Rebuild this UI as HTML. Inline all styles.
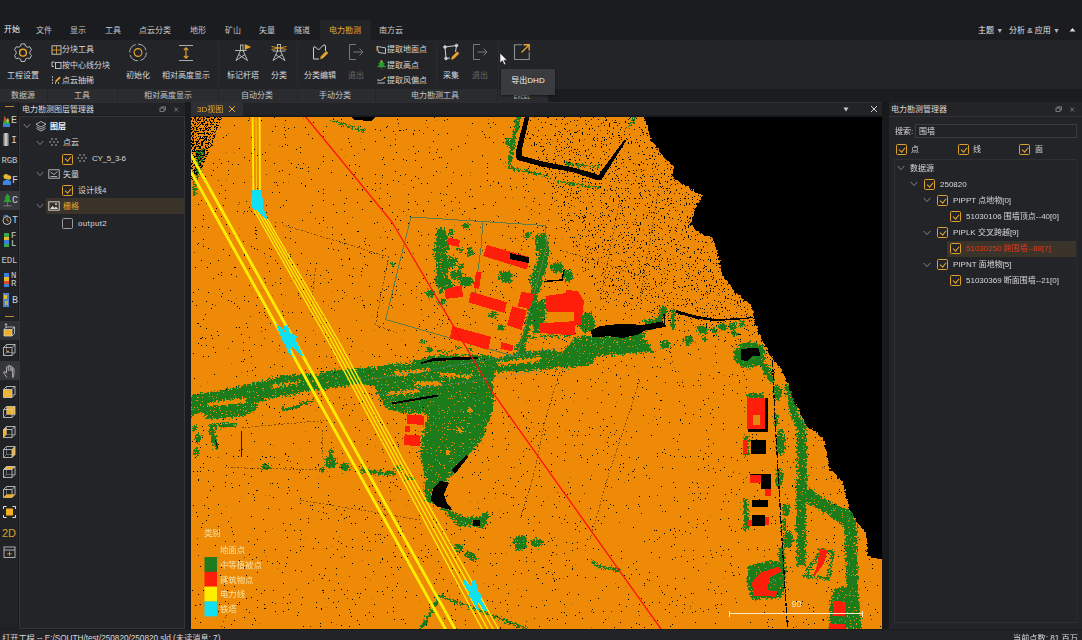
<!DOCTYPE html>
<html lang="zh-CN">
<head>
<meta charset="utf-8">
<title>电力勘测</title>
<style>
*{box-sizing:border-box;margin:0;padding:0}
html,body{width:1082px;height:640px;overflow:hidden;background:#1b1c1f}
body{font-family:"Liberation Sans","Noto Sans CJK SC",sans-serif;font-size:8px;color:#d4d4d4;position:relative;line-height:1}
.abs{position:absolute}
.t{position:absolute;white-space:nowrap;line-height:10px;height:10px}
#top{left:0;top:0;width:1082px;height:40px;background:#1b1c1f}
#ribbon{left:0;top:40px;width:1082px;height:49px;background:#232428}
#groups{left:0;top:89px;width:548px;height:12.5px;background:#2b2c30}
#hdr{left:0;top:101.5px;width:1082px;height:14.5px;background:#222327;border-top:1px solid #2c2d31;border-bottom:1px solid #1a1b1e}
#ltool{left:0;top:102px;width:19px;height:527px;background:#212225;border-right:1px solid #1a1b1e}
#lpanel{left:19px;top:116px;width:166px;height:513px;background:#232428;border:1px solid #34353a}
#rpanel{left:888.8px;top:102px;width:194px;height:527px;background:#232428}
#status{left:0;top:629.6px;width:1082px;height:11px;background:#222327}
#view{left:191px;top:116px;width:692px;height:513px;background:#ee8a05;overflow:hidden}
.m{top:25px;font-size:8px;color:#c8c8c8}
.g{top:91px;font-size:8px;color:#c8c8c8;transform:translateX(-50%)}
.rl{font-size:8px;color:#d6d6d6}
.cb{position:absolute;width:11px;height:11px;border:1px solid #e0a030;border-radius:1.5px;background:#232428}
.cb.on::after{content:"";position:absolute;left:3px;top:0.8px;width:2.8px;height:5.4px;border:solid #e8a832;border-width:0 1.2px 1.2px 0;transform:rotate(40deg)}
.cb.off{border-color:#9a9a9a}
.ar{position:absolute;width:5px;height:5px;border:solid #8a8a8a;border-width:0 1px 1px 0;transform:rotate(45deg)}
</style>
</head>
<body>
<div id="top" class="abs"></div>
<div id="ribbon" class="abs"></div>
<div id="groups" class="abs"></div>
<div id="hdr" class="abs"></div>
<div id="ltool" class="abs"></div>
<div id="lpanel" class="abs"></div>
<div id="rpanel" class="abs"></div>
<div id="view" class="abs"></div>
<!--VIEWSTART-->
<svg class="abs" style="left:191px;top:116px" width="692" height="513" viewBox="191 116 692 513" shape-rendering="crispEdges">
<defs>
<filter id="spk" x="0" y="0" width="100%" height="100%"><feTurbulence type="fractalNoise" baseFrequency="0.61 0.73" numOctaves="3" seed="3"/><feColorMatrix type="matrix" values="0 0 0 0 0  0 0 0 0 0  0 0 0 0 0  0 0 0 -80 18.5"/></filter>
<filter id="spk2" x="0" y="0" width="100%" height="100%"><feTurbulence type="fractalNoise" baseFrequency="0.67 0.59" numOctaves="3" seed="9"/><feColorMatrix type="matrix" values="0 0 0 0 0  0 0 0 0 0  0 0 0 0 0  0 0 0 -80 25"/><feComposite in2="SourceGraphic" operator="in"/></filter>
<filter id="spk3" x="0" y="0" width="100%" height="100%"><feTurbulence type="fractalNoise" baseFrequency="0.55 0.63" numOctaves="3" seed="5"/><feColorMatrix type="matrix" values="0 0 0 0 0  0 0 0 0 0  0 0 0 0 0  0 0 0 -80 38"/><feComposite in2="SourceGraphic" operator="in"/></filter>
<filter id="rough" x="-5%" y="-5%" width="110%" height="110%"><feTurbulence type="fractalNoise" baseFrequency="0.35" numOctaves="2" seed="7" result="n"/><feDisplacementMap in="SourceGraphic" in2="n" scale="5" xChannelSelector="R" yChannelSelector="G"/></filter>
<filter id="rough2" x="-5%" y="-5%" width="110%" height="110%"><feTurbulence type="fractalNoise" baseFrequency="0.45" numOctaves="2" seed="11" result="n"/><feDisplacementMap in="SourceGraphic" in2="n" scale="8" xChannelSelector="R" yChannelSelector="G" result="d"/><feTurbulence type="fractalNoise" baseFrequency="0.57 0.69" numOctaves="3" seed="17"/><feColorMatrix type="matrix" values="0 0 0 0 0  0 0 0 0 0  0 0 0 0 0  0 0 0 -80 24.5" result="h"/><feComposite in="d" in2="h" operator="out"/></filter>
</defs>
<rect x="191" y="116" width="692" height="513" fill="#ee8a05"/>
<rect x="191" y="116" width="692" height="513" fill="#000" filter="url(#spk)"/>
<g filter="url(#spk2)"><polygon fill="#000" points="520,116 660,116 780,380 700,330 600,300 560,220"/></g>
<g fill="#1e7b1e" filter="url(#rough2)"><polygon points="191,395 210,392 236,387.5 247,384.7 266,380 285,375 303.5,374.4 322,373.4 341,368.8 359,368.4 377.5,366.6 392.5,363.75 403.75,364.7 415,361 420,359.5 434,355.5 478,354.5 490,355.5 497,358 520,352 545,350 562,351 575,338 600,336 620,337 631,335 650,330 666,318 667,306 660,306 658,318 644,320 644,342 654,352 631,353 620,349 600,354 590,366 562,368 540,370 510,372 497,372 492,380 494,393 494,406 483,438 467,457 454,473 443,484 430,489 422,465 420,450 425,424 428,416 422.5,412.5 402,412.5 387,408.75 380,399 373.75,386 358.75,384 351,385.6 322,389.4 303.5,392 284.8,396 266,399 257.6,402 256.6,410 247,414.7 228.5,418.4 208,419.4 205,413.8 200,412 191,417.5" /><ellipse cx="422.5" cy="341" rx="2" ry="2.5"/><ellipse cx="430" cy="349.5" rx="3" ry="3"/><ellipse cx="458" cy="347.5" rx="3" ry="2"/><polygon points="436,350 452,351.5 452,353 436,352" /><ellipse cx="470" cy="349" rx="2.5" ry="2"/><polygon points="208,426 213,426 219,447 214,448" /><polygon points="208,424 236,423 236,427 208,428" /><ellipse cx="198" cy="438" rx="3" ry="5"/><ellipse cx="197" cy="452" rx="3" ry="4"/><ellipse cx="194" cy="428" rx="2" ry="4"/><ellipse cx="266" cy="467" rx="4.5" ry="3.5"/><ellipse cx="331" cy="462" rx="6.5" ry="6"/><polygon points="329.5,449 333,449 334,462 328,462" /><ellipse cx="345" cy="467" rx="5" ry="4"/><polygon points="360,468 395,472 395,476 362,473" /><ellipse cx="322" cy="470" rx="3" ry="2"/><polygon points="280,408 300,405 300,408 282,411" /><polygon points="300,402 314,399 314,402 300,405" /><polygon points="425,481 434.5,481 432,492 436,505 428,503 424,492" /><polygon points="450.5,510.5 466.4,517 479.7,517 487.7,510.5 489,518.4 483.7,529 477,526.4 458.4,526.4 450.5,518.4 440,508 444,505" /><ellipse cx="458.5" cy="547.7" rx="5" ry="3.5" transform="rotate(25 458.5 547.7)"/><ellipse cx="471" cy="556" rx="6" ry="4" transform="rotate(30 471 556)"/><ellipse cx="537" cy="543" rx="6" ry="4"/><ellipse cx="398" cy="468" rx="3" ry="3"/><ellipse cx="410" cy="478" rx="4" ry="3"/><polygon points="437,229 445,228 449,240 446,252 450,262 447,275 451,288 440,293 435,280 437,266 434,252 436,240" /><ellipse cx="444" cy="247" rx="6" ry="5"/><ellipse cx="452" cy="262" rx="5" ry="6"/><ellipse cx="456" cy="275" rx="6" ry="5"/><ellipse cx="466" cy="281" rx="7" ry="5.5"/><ellipse cx="447" cy="285" rx="6" ry="6"/><ellipse cx="430" cy="294" rx="4" ry="4.5"/><ellipse cx="442" cy="302" rx="4" ry="3"/><ellipse cx="466" cy="226" rx="4" ry="2.5"/><ellipse cx="460" cy="250" rx="3" ry="2.5"/><ellipse cx="393" cy="264" rx="2.5" ry="2.5"/><ellipse cx="470" cy="252" rx="3" ry="5"/><ellipse cx="461" cy="266" rx="3" ry="3"/><ellipse cx="451" cy="233" rx="3" ry="3"/><ellipse cx="505.5" cy="277" rx="7" ry="6.5"/><polygon points="534,236 546,232 550,250 546,270 540,290 532,300 530,280 538,258" /><ellipse cx="527" cy="235" rx="4" ry="3"/><ellipse cx="557" cy="268" rx="7" ry="5"/><ellipse cx="568" cy="276" rx="5" ry="6"/><ellipse cx="493" cy="315" rx="5" ry="3"/><ellipse cx="501" cy="327" rx="3" ry="3"/><polygon points="536,280 541,282 523,355 517,355" /><polygon points="536,302 545,298 546,312 544,332 534,334 530,318" /><polygon points="581,314 590,312 595,322 594,332 582,332 578,324" /><polygon points="574,336 630,336 630,354 600,356 574,352" /><ellipse cx="520" cy="349" rx="5" ry="6"/><polygon points="528,336 572,334 572,336 528,338" /><polygon points="670.6,308 675,308 675,330 671,330" /><ellipse cx="665" cy="345" rx="5" ry="4.5"/><ellipse cx="688.4" cy="340.6" rx="4.5" ry="4.5"/><ellipse cx="702.5" cy="329.7" rx="6" ry="4"/><ellipse cx="722" cy="327" rx="4" ry="4"/><ellipse cx="732.5" cy="326" rx="4" ry="4"/><ellipse cx="742" cy="324" rx="3" ry="3"/><ellipse cx="705" cy="339" rx="3" ry="2.5"/><ellipse cx="734" cy="333.4" rx="3" ry="3"/><ellipse cx="714" cy="331" rx="3" ry="3"/><ellipse cx="626" cy="343" rx="6" ry="6"/><ellipse cx="642" cy="346" rx="8" ry="6"/><ellipse cx="749.5" cy="355" rx="16" ry="13"/><polygon points="760,362 770,366 774,380 772,384 764,374" /><ellipse cx="777.5" cy="392" rx="4.5" ry="8"/><ellipse cx="780.5" cy="442" rx="4.5" ry="13"/><ellipse cx="776" cy="420" rx="2.5" ry="6"/><ellipse cx="779.5" cy="478" rx="4" ry="10"/><ellipse cx="786" cy="510" rx="4" ry="6"/><ellipse cx="788" cy="540" rx="5" ry="8"/><ellipse cx="781.5" cy="556" rx="4" ry="9"/><ellipse cx="784" cy="525" rx="2.5" ry="6"/><polygon points="784,384 790,384 797.5,398 798,414 806,426 807,462 806.5,487 830,501 851.6,512 857,521 858,600 862,629 848,629 846,560 844,526 822,511 806,502 806.4,566 797,566 796,497 797,462 797,430 789,412 787,396" /><polygon points="747.5,392.5 762.5,392.5 763,398 747,398" /><polygon points="744,436 749,436 749,456 744,456" /><polygon points="743,500 748,498 749,530 744,530" /><polygon points="748,566 760,562 784,560 786.5,572 782,598 752,600 747,584" /><polygon points="819.7,548 834.3,551 830.3,580 803.8,577.5 804,574.5 827.5,577 831,553.5 819,551" /><polygon points="804,574 821,549 823,550.5 806.5,576" /><polygon points="836,588 850,586 858,592 862,629 829,629 830,606 832,594" /><ellipse cx="509.5" cy="142.5" rx="4" ry="4.5"/><polygon points="516,117 521,117 514,150 511,165 507,165 510,148" /><polygon points="505.7,165.5 549,175 548,177 505,168" /><polygon points="565.8,162 599.4,167 599,168.5 565.5,163.5" /><polygon points="556,180 599,187 599,189 556,182" /><polygon points="633,117 636,117 630,128 628,127" /><polygon points="331,119 366,131 365,133 330,121" /><polygon points="196,150 206,148 200,170 195,196 192,196 196,170" /><polygon points="440,594.5 484,611 528,628 524,629 482,613 440,597" /><polygon points="439,595 442,596 423,629 419,629" /><ellipse cx="520.2" cy="543" rx="7" ry="8"/><polygon points="590,559 596,563 604,566.5 620,568.5 620,571 602,569 592,564" /></g>
<polyline points="411,217 545,225.5 547,245 517,357 385.6,319.5 411,217" fill="none" stroke="#5f7d45" stroke-width="1"/>
<polyline points="483,221 481,248 474,300" fill="none" stroke="#5f7d45" stroke-width="1"/>
<g fill="#ee8a05" filter="url(#rough2)"><polygon points="207,403 219,401 234,399.5 246,398 247,401.5 234,404 219,405.5 207,407" /><polygon points="441,373 471,375 471,378 441,377" /><polygon points="415,381 441,380.5 441,386 415,386" /><polygon points="387,393 419,389 419,392 387,396" /><polygon points="395,372 430,368 430,371 395,376" /><polygon points="497,362 540,357 540,361 497,366" /><polygon points="545.6,311 573.75,311 573.75,322 545.6,322" /><polygon points="270,386 300,381 300,383 270,389" /><ellipse cx="460" cy="430" rx="3" ry="2"/><ellipse cx="448" cy="452" rx="2" ry="3"/><ellipse cx="470" cy="410" rx="2" ry="2"/></g>
<g stroke="#7a80b8" stroke-width="0.8" stroke-dasharray="1.5 2" fill="none" shape-rendering="auto"><line x1="364" y1="380.6" x2="560" y2="348"/><line x1="372" y1="395.6" x2="540" y2="371"/></g>
<g fill="#000"><polygon points="420.6,362.8 433.75,358 477.8,356.8 477.8,359.2 433.75,361 420.6,364" /><polygon points="391.6,402.6 437.5,394.5 437.5,396.8 391.6,404.4" /><polygon points="439.9,481 449,482.6 443.8,494.5 447,503 453,510.5 437,506.5 430.5,500 433,489" /><polygon points="473,519.8 479.7,519.8 479.7,526.4 473,526.4" /><polygon points="451,470 466,455 468,457 455,474" /><polygon points="590.6,330.6 600,326 622.5,323.5 642.5,325 663,321.25 665,327 644.4,330.6 638.75,334.4 622.5,338 609.4,336.25 592.5,337.2" /><polyline points="664,313.75 665,327" fill="none" stroke="#000" stroke-width="1.3"/><polyline points="544,281.5 562,280 564,270" fill="none" stroke="#000" stroke-width="1.5"/><polygon points="525,116 529.5,116 521.5,152 522,156 545,162 573,167.5 595,173.5 598.5,175 624.5,139.5 627,139.5 601,180.5 597,180 572,172 544,167 517,160 515.5,153" /><polygon points="676,310 695,315.5 714,318.8 736,318.4 753,317 753,318 736,320 714,321 695,318.5 676,313" /><polygon points="741,349 758,347.5 760.6,356 752,356 747,361 741,360" /><polygon points="765,398 768,398 768,431.5 747.5,431.5 747.5,428.5 765,428.5" /><polygon points="750.6,440 766,440 766,454 750.6,454" /><polygon points="749.5,474 770.5,474 770.5,489 761,489 761,483 749.5,483" /><polygon points="752,500 768,500 768,506.5 752,506.5" /><polygon points="752,514.5 765,514.5 765,526.4 752,526.4" /><polyline points="772.5,360 775,420 778,470 782,540 787.5,628" fill="none" stroke="#000" stroke-width="1.2" stroke-dasharray="7 2 3 1"/><polygon points="350,116 376,116 372,121 354,120" /><polyline points="241.6,430.6 241.6,457" fill="none" stroke="#000" stroke-width="0.8"/><polyline points="215.4,440 218,449" fill="none" stroke="#000" stroke-width="0.8"/></g>
<g filter="url(#spk3)"><polygon fill="#000" points="191,116 222,116 214,140 202,168 191,182"/></g>
<g stroke="#1a1000" stroke-width="0.7" stroke-dasharray="2 1.5 1 2" fill="none" opacity="0.75">
<polyline points="282.5,225 340,242 388.8,257 381,295 375.5,325 399.4,333" fill="none" />
<polyline points="315.7,267.7 310.4,314" fill="none" />
<polyline points="224.5,467.5 322.8,470" fill="none" />
<polyline points="322.8,430 322.8,457" fill="none" />
<polyline points="241.8,427.7 330,420" fill="none" />
<polyline points="560,372 545,420 535,470 520,520" fill="none" />
<polyline points="640,380 610,470 590,540" fill="none" />
<polyline points="300,500 420,520" fill="none" />
<polyline points="560,250 600,262 650,280" fill="none" />
<polyline points="620,200 600,300" fill="none" />
<polyline points="660,180 640,300" fill="none" />
</g>
<g fill="#ff1e0a"><polygon points="448,237.5 460,240 459,247 447,244.5" /><polygon points="487,245 529.5,257 527,269.6 483,256" /><polygon points="476,271.7 481.7,271.7 479,289 473.7,287.7" /><polygon points="444.5,289 461.7,285 463,297 445.8,298.8" /><polygon points="471,291.7 507,302.3 504.2,313 468.4,302.3" /><polygon points="521.5,291.7 534.8,294.3 529.5,309 517.5,306.3" /><polygon points="512.2,306.3 526.8,310.3 521.5,330.2 507,325" /><polygon points="452.4,326.2 491,336.8 488.3,350 449.8,338.2" /><polygon points="501.6,342 513.5,345.6 512.2,351.4 500.3,348.8" /><polygon points="545.4,296 566,293 566,290 578,291 584,301 581.3,325 573.3,325 574,312 546.7,311.6" /><polygon points="538.8,323.5 576,321 574.6,335.5 540,333" /><polygon points="407,414.4 424.5,415.7 424,425 406.7,423.7" /><polygon points="404.6,426.3 410,426.3 410,431.7 404.6,431.7" /><polygon points="404.6,434.3 420.6,435.6 419.8,446.3 403.8,445" /><polygon points="747,398 765,398 765,428.75 747,428.75" /><polygon points="742.5,440 747.2,440 747.2,453.75 742.5,453.75" /><polygon points="750,475.4 761,475.4 761,482.8 750,482.8" /><polygon points="765,489 770.5,489 770.5,496 765,496" /><polygon points="746.6,520 752,520 752,526.4 746.6,526.4" /><polygon points="765,517 769,517 769,525 765,525" /><polygon points="760,573 779.9,566.3 781.2,571.6 769.2,578.2 767.9,590.2 777.2,591.5 775.9,596.8 753.3,595.5 752,582.2" /><polygon points="820,549 827.7,550.5 823.5,564 819,570 814,577 813,575.5 817,566" /><polygon points="833.5,600.8 846.3,602 845,616.7 832.5,615.5" /><polygon points="829,623.4 845,624 845,629 829,629" /></g>
<polygon fill="#000" points="509.5,253 529.5,257.5 528.5,263 510,259"/>
<g fill="#e08a10"><polygon points="752.5,415 760,415 760,425 752.5,425" /></g>
<polyline points="305,116 392,222 493,393 661,629" fill="none" stroke="#ff1010" stroke-width="1.3" shape-rendering="auto"/>
<g stroke="#ffee00" fill="none" shape-rendering="auto">
<line x1="189" y1="151.4" x2="455.6" y2="630" stroke-width="2.8"/>
<line x1="189" y1="168.4" x2="446" y2="630" stroke-width="2.8"/>
<line x1="252.6" y1="116" x2="253.4" y2="200" stroke-width="1.8"/><line x1="259.6" y1="116" x2="260" y2="200" stroke-width="1.8"/><line x1="256" y1="116" x2="256.6" y2="200" stroke-width="0.8" stroke-opacity="0.8"/>
<polyline points="254,210 327.5,340 392,460 481,627 482.6,630" stroke-width="1.4"/>
<polyline points="256.8,210 331,340 395.6,460 486.5,627 488.1,630" stroke-width="1.4"/>
<polyline points="259.5,210 334.5,340 399.3,460 492,627 493.6,630" stroke-width="1.4"/>
<polyline points="262,210 338,340 403,460 497.4,627 499.0,630" stroke-width="1.4"/>
</g>
<g fill="#10e0f0">
<polygon points="252,190 261,190 262.7,199 263,208 268,219 264,218 258,211 253,209 250.8,203" />
<polygon points="276,324 281,327 285,333 284,326 287,325 291,334 297,336 296,341 300,349 304,357 299,354 293,347 290,349 293,357 289,354 285,345 282,340" />
<polygon points="462.4,580 466,580 470,587 473,580 476,581 478,592 481,594 481,599 484,604 487.7,611.4 484,611 479,603 477,604 480,611 477,610 472,600 468,596 470,593 466,588" />
</g>
<path filter="url(#rough)" fill="#000" d="M642,110 L651,140 L663,156 L674,167 L672,177 L702,196 L695,209 L691,224 L697,232 L712,237 L718,254 L722,275 L735,292 L752,306 L754,321 L762,340 L769,354 L783,372 L794,400 L806,425 L824,439 L829,469 L843,483 L850,511 L866,534 L868,557 L882,559 L895,559 L895,100 Z"/>
<g font-family="Liberation Sans, Noto Sans CJK SC, sans-serif" font-size="8.4" fill="#f2e4ac" shape-rendering="auto">
<text x="204" y="536">类别</text>
<rect x="204.5" y="557" width="12.5" height="15" fill="#1e7b1e"/><rect x="204.5" y="571.8" width="12.5" height="15" fill="#ff1e0a"/><rect x="204.5" y="586.6" width="12.5" height="15" fill="#ffee00"/><rect x="204.5" y="601.4" width="12.5" height="15" fill="#10e0f0"/>
<text x="220" y="553">地面点</text>
<text x="220" y="568">中等植被点</text>
<text x="220" y="582.5">建筑物点</text>
<text x="220" y="597">电力线</text>
<text x="220" y="611.5">铁塔</text>
<path d="M729.5,610.5 V616.5 M729.5,613.5 H862.5 M862.5,610.5 V616.5" stroke="#f6ecc8" stroke-width="1" fill="none" shape-rendering="crispEdges"/>
<text x="796.5" y="607" text-anchor="middle" font-size="9" fill="#f4e6b4">90</text>
</g>
</svg>
<!--VIEWEND-->
<div id="status" class="abs"></div>
<!--CHROMESTART-->
<div class="abs" style="left:320px;top:20px;width:51px;height:20px;background:#232428"></div>
<div class="t m" style="left:36px;top:26.1px;">文件</div>
<div class="t m" style="left:70px;top:26.1px;">显示</div>
<div class="t m" style="left:105px;top:26.1px;">工具</div>
<div class="t m" style="left:139px;top:26.1px;">点云分类</div>
<div class="t m" style="left:190px;top:26.1px;">地形</div>
<div class="t m" style="left:225px;top:26.1px;">矿山</div>
<div class="t m" style="left:259px;top:26.1px;">矢量</div>
<div class="t m" style="left:294px;top:26.1px;">隧道</div>
<div class="t m" style="left:379px;top:26.1px;">南方云</div>
<div class="t m" style="left:4px;top:25.1px;color:#f2f2f2">开始</div>
<div class="t m" style="left:329px;top:26.1px;color:#e6a82e">电力勘测</div>
<div class="t m" style="left:978px;top:25.6px;color:#e4e4e4">主题 <span style="font-size:7px;color:#b4b4b4">▼</span></div>
<div class="t m" style="left:1009px;top:25.6px;color:#e4e4e4">分析 &amp; 应用 <span style="font-size:7px;color:#b4b4b4">▼</span></div>
<svg class="abs" style="left:1069px;top:27px" width="7" height="5" viewBox="0 0 7 5"><path d="M0.5,4.5 L3.5,1 L6.5,4.5 Z" fill="#ddd"/></svg>
<svg class="abs" style="left:13px;top:42px" width="20" height="20" viewBox="0 0 20 20" fill="none" stroke="#cfcfcf" stroke-width="1"><path d="M18.56,13.48 L16.69,16.72 L14.46,16.09 L12.44,17.26 L11.87,19.50 L8.13,19.50 L7.56,17.26 L5.54,16.09 L3.31,16.72 L1.44,13.48 L3.10,11.87 L3.10,9.53 L1.44,7.92 L3.31,4.68 L5.54,5.31 L7.56,4.14 L8.13,1.90 L11.87,1.90 L12.44,4.14 L14.46,5.31 L16.69,4.68 L18.56,7.92 L16.90,9.53 L16.90,11.87 Z" stroke-width="1" stroke-linejoin="round" stroke="#bdbdbd"/><circle cx="10" cy="10.7" r="3.4" stroke="#e8a62c" stroke-width="1.4"/></svg>
<div class="t" style="left:23px;top:71px;transform:translateX(-50%);color:#d8d8d8">工程设置</div>
<svg class="abs" style="left:128px;top:42px" width="20" height="20" viewBox="0 0 20 20" fill="none" stroke="#cfcfcf" stroke-width="1"><circle cx="10" cy="10.5" r="8.3" stroke-dasharray="10.5 2.5" stroke-width="0.9" stroke="#bdbdbd"/><circle cx="10" cy="10.5" r="3.9" stroke="#e8a62c" stroke-width="1.1"/></svg>
<div class="t" style="left:138px;top:71px;transform:translateX(-50%);color:#d8d8d8">初始化</div>
<svg class="abs" style="left:176px;top:42px" width="20" height="20" viewBox="0 0 20 20" fill="none" stroke="#cfcfcf" stroke-width="1"><path d="M3,3.5 H17 M3,18.5 H17" stroke-width="0.9" stroke="#bdbdbd"/><path d="M10,6 V16 M7.8,8.2 L10,5.8 12.2,8.2 M7.8,13.8 L10,16.2 12.2,13.8" stroke="#e8a62c" stroke-width="1.1"/></svg>
<div class="t" style="left:186px;top:71px;transform:translateX(-50%);color:#d8d8d8">相对高度显示</div>
<svg class="abs" style="left:233px;top:42px" width="20" height="20" viewBox="0 0 20 20" fill="none" stroke="#cfcfcf" stroke-width="1"><path d="M7,3 H10.5 M7.5,3 V8.5 L3,18.5 M10,3 V8.5 L14.5,18.5 M2,8.5 H13.5 M5.5,12.5 L14.5,18.5 M12,12.5 L3,18.5" stroke-width="0.9" stroke="#c4c4c4"/><path d="M12,2.5 L17.5,5 L12,7.5 Z" fill="#e8a62c" stroke="#e8a62c" stroke-width="0.6"/></svg>
<div class="t" style="left:243px;top:71px;transform:translateX(-50%);color:#d8d8d8">标记杆塔</div>
<svg class="abs" style="left:269px;top:42px" width="20" height="20" viewBox="0 0 20 20" fill="none" stroke="#cfcfcf" stroke-width="1"><path d="M8,2.5 H12 M8.5,2.5 V9 L4,18.5 M11.5,2.5 V9 L16,18.5 M3.5,9 H16.5 M6.5,12.5 L16,18.5 M13.5,12.5 L4,18.5" stroke-width="0.9" stroke="#c4c4c4"/><path d="M2.5,4.5 Q10,7.5 17.5,4.5 M2.5,7.5 Q10,4.5 17.5,7.5" stroke="#e8a62c" stroke-width="0.9"/></svg>
<div class="t" style="left:279px;top:71px;transform:translateX(-50%);color:#d8d8d8">分类</div>
<svg class="abs" style="left:310px;top:42px" width="20" height="20" viewBox="0 0 20 20" fill="none" stroke="#cfcfcf" stroke-width="1"><path d="M3.5,17 V6 Q3.5,4 5.5,5 L8.5,8 L13.5,3 Q15.5,2 15.5,5 V9 M3.5,17 H9" stroke-width="1"/><path d="M10.5,17 L11.2,14.2 L16.2,9.2 L18,11 L13,16 Z" fill="#e8a62c" stroke="#e8a62c" stroke-width="0.5"/></svg>
<div class="t" style="left:320px;top:71px;transform:translateX(-50%);color:#d8d8d8">分类编辑</div>
<svg class="abs" style="left:346px;top:42px" width="20" height="20" viewBox="0 0 20 20" fill="none" stroke="#77787b" stroke-width="1"><path d="M10,2.5 H3.5 V17.5 H10 M7.5,10 H17 M13.5,6.5 L17,10 L13.5,13.5" stroke-width="1"/></svg>
<div class="t" style="left:356px;top:71px;transform:translateX(-50%);color:#6a6b6e">退出</div>
<svg class="abs" style="left:441px;top:42px" width="20" height="20" viewBox="0 0 20 20" fill="none" stroke="#cfcfcf" stroke-width="1"><path d="M4,5 L15.5,3.5 L14.5,10 M4,5 L5,16.5 L9,16" stroke-width="1"/><circle cx="4" cy="5" r="1.3" fill="#cfcfcf"/><circle cx="15.5" cy="3.5" r="1.3" fill="#cfcfcf"/><circle cx="5" cy="16.5" r="1.3" fill="#cfcfcf"/><path d="M10.5,17.5 L11.2,14.7 L16.2,9.7 L18,11.5 L13,16.5 Z" fill="#e8a62c" stroke="#e8a62c" stroke-width="0.5"/></svg>
<div class="t" style="left:451px;top:71px;transform:translateX(-50%);color:#d8d8d8">采集</div>
<svg class="abs" style="left:470px;top:42px" width="20" height="20" viewBox="0 0 20 20" fill="none" stroke="#77787b" stroke-width="1"><path d="M10,2.5 H3.5 V17.5 H10 M7.5,10 H17 M13.5,6.5 L17,10 L13.5,13.5" stroke-width="1"/></svg>
<div class="t" style="left:480px;top:71px;transform:translateX(-50%);color:#6a6b6e">退出</div>
<svg class="abs" style="left:512px;top:42px" width="20" height="20" viewBox="0 0 20 20" fill="none" stroke="#cfcfcf" stroke-width="1"><path d="M10,2.8 H2.5 V17.5 H17.2 V10" stroke="#8c8d90" stroke-width="1.1"/><path d="M9.5,10.5 L17,3 M11.5,2.8 H17.2 V8.5" stroke="#e8a62c" stroke-width="1.4"/></svg>
<div class="t" style="left:522px;top:71px;transform:translateX(-50%);color:#d8d8d8"></div>
<svg class="abs" style="left:51px;top:44.5px" width="11" height="10" viewBox="0 0 11 10" fill="none" stroke="#cfcfcf" stroke-width="0.9"><rect x="1" y="0.8" width="9" height="8.4"/><path d="M5.5,0.8 V9.2 M1,5 H10" stroke="#e8a62c" stroke-width="0.8"/></svg>
<div class="t " style="left:62px;top:45.1px;color:#d8d8d8">分块工具</div>
<svg class="abs" style="left:51px;top:60px" width="11" height="10" viewBox="0 0 11 10" fill="none" stroke="#cfcfcf" stroke-width="0.9"><path d="M3.5,2 H1 V6.5 H3"/><rect x="4.5" y="2.5" width="5.5" height="6"/></svg>
<div class="t " style="left:62px;top:60.6px;color:#d8d8d8">按中心线分块</div>
<svg class="abs" style="left:51px;top:75px" width="11" height="10" viewBox="0 0 11 10" fill="none" stroke="#cfcfcf" stroke-width="0.9"><path d="M1,2 h1 M1,5 h1 M1,8 h1 M4,8 h1 M7,8 h1" stroke-width="1.3"/><path d="M4,6 L8.5,1.5 L9.8,2.8 L5.3,7.3 Z" fill="#e8a62c" stroke="none"/></svg>
<div class="t " style="left:62px;top:75.6px;color:#d8d8d8">点云抽稀</div>
<svg class="abs" style="left:376px;top:44.5px" width="11" height="10" viewBox="0 0 11 10" fill="none" stroke="#cfcfcf" stroke-width="0.9"><path d="M1,1.5 L9.5,2.8 V8.5 L2.5,7.5 Z"/><path d="M1,1.5 V6" stroke="#e8a62c"/></svg>
<div class="t " style="left:387px;top:45.1px;color:#d8d8d8">提取地面点</div>
<svg class="abs" style="left:376px;top:60px" width="11" height="10" viewBox="0 0 11 10" fill="none" stroke="#cfcfcf" stroke-width="0.9"><path d="M5.5,0.5 L2.5,4 H4 L1.5,7 H9.5 L7,4 H8.5 Z M5.5,7 V9.5" fill="#2c9a2c" stroke="#2c9a2c" stroke-width="0.5"/><circle cx="5.5" cy="1.2" r="1" fill="#e8a62c" stroke="none"/></svg>
<div class="t " style="left:387px;top:60.6px;color:#d8d8d8">提取高点</div>
<svg class="abs" style="left:376px;top:75px" width="11" height="10" viewBox="0 0 11 10" fill="none" stroke="#cfcfcf" stroke-width="0.9"><path d="M1,5 Q5,6.5 8,3.5 M1.5,8 H9"/><circle cx="8.8" cy="2.8" r="1" fill="#e8a62c" stroke="none"/></svg>
<div class="t " style="left:387px;top:75.6px;color:#d8d8d8">提取风偏点</div>
<div class="abs" style="left:218px;top:42px;width:1px;height:44px;background:#2b2c30"></div>
<div class="abs" style="left:297px;top:42px;width:1px;height:44px;background:#2b2c30"></div>
<div class="abs" style="left:436px;top:42px;width:1px;height:44px;background:#2b2c30"></div>
<div class="abs" style="left:498px;top:42px;width:1px;height:44px;background:#2b2c30"></div>
<div class="t" style="left:23px;top:91px;transform:translateX(-50%);color:#c4c4c4">数据源</div>
<div class="t" style="left:82px;top:91px;transform:translateX(-50%);color:#c4c4c4">工具</div>
<div class="t" style="left:168px;top:91px;transform:translateX(-50%);color:#c4c4c4">相对高度显示</div>
<div class="t" style="left:257px;top:91px;transform:translateX(-50%);color:#c4c4c4">自动分类</div>
<div class="t" style="left:335px;top:91px;transform:translateX(-50%);color:#c4c4c4">手动分类</div>
<div class="t" style="left:435px;top:91px;transform:translateX(-50%);color:#c4c4c4">电力勘测工具</div>
<div class="t" style="left:522px;top:93px;transform:translateX(-50%);color:#b8b8b8;font-size:5px;line-height:8px;height:8px">EXCEL</div>
<div class="abs" style="left:47px;top:90px;width:1px;height:11px;background:#232428"></div>
<div class="abs" style="left:117px;top:90px;width:1px;height:11px;background:#232428"></div>
<div class="abs" style="left:218px;top:90px;width:1px;height:11px;background:#232428"></div>
<div class="abs" style="left:297px;top:90px;width:1px;height:11px;background:#232428"></div>
<div class="abs" style="left:375px;top:90px;width:1px;height:11px;background:#232428"></div>
<div class="abs" style="left:497px;top:90px;width:1px;height:11px;background:#232428"></div>
<div class="abs" style="left:501px;top:69px;width:54px;height:26px;background:#3a3b3e;box-shadow:0 1px 2px rgba(0,0,0,.5)"></div>
<div class="t" style="left:528px;top:76px;transform:translateX(-50%);color:#f2f2f2">导出DHD</div>
<svg class="abs" style="left:499px;top:52px" width="10" height="14" viewBox="0 0 10 14"><path d="M1,1 L1,11 L3.4,8.8 L5.2,12.8 L6.8,12 L5,8.2 L8.2,8.2 Z" fill="#f4f4f4" stroke="#222" stroke-width="0.6"/></svg>
<div class="abs" style="left:190px;top:102px;width:53px;height:14px;background:#2f3034"></div>
<div class="t " style="left:197px;top:105.1px;color:#e6a82e">3D视图</div>
<svg class="abs" style="left:228px;top:105px" width="8" height="8" viewBox="0 0 8 8"><path d="M1,1 L7,7 M7,1 L1,7" stroke="#e6a82e" stroke-width="1"/></svg>
<svg class="abs" style="left:843px;top:107px" width="6" height="5" viewBox="0 0 6 5"><path d="M0.5,0.5 H5.5 L3,4.5 Z" fill="#c8c8c8"/></svg>
<svg class="abs" style="left:870px;top:105px" width="8" height="8" viewBox="0 0 8 8"><path d="M1,1 L7,7 M7,1 L1,7" stroke="#d0d0d0" stroke-width="1"/></svg>
<div class="t " style="left:22px;top:105.1px;color:#d8d8d8">电力勘测图层管理器</div>
<svg class="abs" style="left:159px;top:106px" width="22" height="7" viewBox="0 0 22 7" fill="none" stroke="#8a8b8e" stroke-width="0.8"><rect x="1" y="2" width="4" height="3.5"/><path d="M2.5,2 V0.8 H6.5 V4 H5"/><path d="M15.5,1.5 L19,5.5 M19,1.5 L15.5,5.5"/></svg>
<div class="t " style="left:891px;top:105.1px;color:#d8d8d8">电力勘测管理器</div>
<svg class="abs" style="left:1055px;top:106px" width="22" height="7" viewBox="0 0 22 7" fill="none" stroke="#8a8b8e" stroke-width="0.8"><rect x="1" y="2" width="4" height="3.5"/><path d="M2.5,2 V0.8 H6.5 V4 H5"/><path d="M15.5,1.5 L19,5.5 M19,1.5 L15.5,5.5"/></svg>
<div class="abs" style="left:46px;top:198px;width:138px;height:16px;background:#3b342a"></div>
<svg class="abs" style="left:23px;top:123px" width="8" height="6" viewBox="0 0 8 6"><path d="M0.8,1 L4,4.6 L7.2,1" fill="none" stroke="#8d8e91" stroke-width="0.9"/></svg>
<svg class="abs" style="left:35px;top:120px" width="12" height="12" viewBox="0 0 12 12" fill="none" stroke="#cfcfcf" stroke-width="0.8"><path d="M6,1.5 L11,4.2 L6,7 L1,4.2 Z M1.5,6.5 L6,9 L10.5,6.5 M1.5,8.5 L6,11 L10.5,8.5"/></svg>
<div class="t " style="left:50px;top:122.1px;color:#f4f4f4;font-weight:bold">图层</div>
<svg class="abs" style="left:36px;top:139.8px" width="8" height="6" viewBox="0 0 8 6"><path d="M0.8,1 L4,4.6 L7.2,1" fill="none" stroke="#8d8e91" stroke-width="0.9"/></svg>
<svg class="abs" style="left:49px;top:137px" width="10" height="10" viewBox="0 0 10 10"><g fill="#bdbdbd"><circle cx="3" cy="2" r="0.8"/><circle cx="7" cy="2" r="0.8"/><circle cx="1.2" cy="5" r="0.8"/><circle cx="5" cy="5" r="0.8"/><circle cx="8.8" cy="5" r="0.8"/><circle cx="3" cy="8" r="0.8"/><circle cx="7" cy="8" r="0.8"/></g></svg>
<div class="t " style="left:63px;top:138.4px;color:#d8d8d8">点云</div>
<div class="cb on" style="left:62px;top:153.60000000000002px"></div>
<svg class="abs" style="left:77px;top:153px" width="10" height="10" viewBox="0 0 10 10"><g fill="#bdbdbd"><circle cx="3" cy="2" r="0.8"/><circle cx="7" cy="2" r="0.8"/><circle cx="1.2" cy="5" r="0.8"/><circle cx="5" cy="5" r="0.8"/><circle cx="8.8" cy="5" r="0.8"/><circle cx="3" cy="8" r="0.8"/><circle cx="7" cy="8" r="0.8"/></g></svg>
<div class="t " style="left:92px;top:154.4px;color:#d8d8d8;letter-spacing:-0.3px">CY_5_3-6</div>
<svg class="abs" style="left:36px;top:171px" width="8" height="6" viewBox="0 0 8 6"><path d="M0.8,1 L4,4.6 L7.2,1" fill="none" stroke="#8d8e91" stroke-width="0.9"/></svg>
<svg class="abs" style="left:48px;top:169px" width="12" height="10" viewBox="0 0 12 10" fill="none" stroke="#cfcfcf" stroke-width="0.8"><rect x="0.8" y="0.8" width="10.4" height="8.4"/><path d="M2.5,3 L6,5.5 L9.5,2.5 M2.5,7.5 H9"/></svg>
<div class="t " style="left:63px;top:170.0px;color:#d8d8d8">矢量</div>
<div class="cb on" style="left:62px;top:185.4px"></div>
<div class="t " style="left:78px;top:186.2px;color:#d8d8d8">设计线4</div>
<svg class="abs" style="left:36px;top:203px" width="8" height="6" viewBox="0 0 8 6"><path d="M0.8,1 L4,4.6 L7.2,1" fill="none" stroke="#8d8e91" stroke-width="0.9"/></svg>
<svg class="abs" style="left:48px;top:201px" width="12" height="10" viewBox="0 0 12 10" fill="none" stroke="#dcdcdc" stroke-width="0.9"><rect x="0.8" y="0.8" width="10.4" height="8.4"/><path d="M2,8 L4.5,5 L6.5,7 L8,5.5 L10,8 Z" fill="#dcdcdc" stroke="none"/><circle cx="8" cy="3" r="0.9" fill="#dcdcdc" stroke="none"/></svg>
<div class="t " style="left:63px;top:202.1px;color:#e6a82e">栅格</div>
<div class="cb off" style="left:62px;top:217.8px"></div>
<div class="t " style="left:78px;top:218.6px;color:#d8d8d8;letter-spacing:0.35px">output2</div>
<div class="abs" style="left:5px;top:106px;width:9px;height:1px;background:#c08a28"></div>
<div class="abs" style="left:0px;top:191px;width:19px;height:19px;background:#36373b"></div>
<div class="abs" style="left:0px;top:321px;width:19px;height:19px;background:#303135"></div>
<div class="abs" style="left:0px;top:361px;width:19px;height:19px;background:#36373b"></div>
<div class="abs" style="left:5px;top:316px;width:9px;height:1px;background:#c08a28"></div>
<svg class="abs" style="left:3px;top:115px" width="7" height="12" viewBox="0 0 7 12"><rect x="0" y="9" width="7" height="3" fill="#3b7fd9"/><path d="M0,9 L1.5,1 L3.5,5 L5,3 L7,9 Z" fill="#35a84a"/><path d="M1.5,1 L3.5,5 L2,7 L0.8,5 Z" fill="#e04a2a"/><path d="M3.5,5 L5,3 L6,6 L4,8 Z" fill="#e8b830"/></svg>
<div class="t" style="left:11px;top:115.3px;height:12px;line-height:12px;font-family:'Liberation Mono',monospace;font-size:10px;color:#cfcfcf;">E</div>
<svg class="abs" style="left:3px;top:133px" width="6" height="13" viewBox="0 0 6 13"><defs><linearGradient id="gi" x1="0" x2="1"><stop offset="0" stop-color="#555"/><stop offset="0.5" stop-color="#ddd"/><stop offset="1" stop-color="#555"/></linearGradient></defs><rect width="6" height="13" rx="1.5" fill="url(#gi)"/></svg>
<div class="t" style="left:11px;top:134.5px;height:12px;line-height:12px;font-family:'Liberation Mono',monospace;font-size:10px;color:#cfcfcf;">I</div>
<div class="t" style="left:1.5px;top:155px;height:12px;line-height:12px;font-family:'Liberation Mono',monospace;font-size:9px;color:#c8c8c8;letter-spacing:-0.1px">RGB</div>
<svg class="abs" style="left:2px;top:173px" width="10" height="13" viewBox="0 0 10 13"><circle cx="4" cy="3.5" r="2.5" fill="#e8b830"/><circle cx="7" cy="4.5" r="2.2" fill="#e8b830"/><path d="M1,12 Q0,7 3,7.5 Q5,5 7,7.5 Q10,7 9,12 Z" fill="#3f86e0"/></svg>
<div class="t" style="left:12px;top:175px;height:12px;line-height:12px;font-family:'Liberation Mono',monospace;font-size:10px;color:#cfcfcf;">F</div>
<svg class="abs" style="left:3px;top:193px" width="9" height="14" viewBox="0 0 9 14"><path d="M4.5,0.5 L1.5,5 H3 L0.5,9 H8.5 L6,5 H7.5 Z" fill="#2ea02e"/><rect x="4" y="9" width="1" height="4" fill="#2ea02e"/><rect x="0.5" y="12.5" width="8" height="0.8" fill="#888"/></svg>
<div class="t" style="left:12px;top:194.6px;height:12px;line-height:12px;font-family:'Liberation Mono',monospace;font-size:10px;color:#cfcfcf;">C</div>
<svg class="abs" style="left:2px;top:214px" width="10" height="12" viewBox="0 0 10 12" fill="none"><circle cx="5" cy="6.5" r="4" stroke="#d8d8d8" stroke-width="0.9"/><path d="M5,6.5 V4 M5,6.5 L7,7.5" stroke="#e8a62c" stroke-width="0.9"/><path d="M1,2.5 Q3,0.5 6,1.5" stroke="#3f86e0" stroke-width="1"/></svg>
<div class="t" style="left:12px;top:215.4px;height:12px;line-height:12px;font-family:'Liberation Mono',monospace;font-size:10px;color:#cfcfcf;">T</div>
<svg class="abs" style="left:4px;top:233px" width="5" height="14" viewBox="0 0 5 14"><rect width="5" height="4" fill="#35a84a"/><rect y="4" width="5" height="3" fill="#e8b830"/><rect y="7" width="5" height="4" fill="#3b7fd9"/><rect y="11" width="5" height="3" fill="#35a84a"/></svg>
<div class="t" style="left:11px;top:230.3px;height:12px;line-height:12px;font-family:'Liberation Mono',monospace;font-size:9px;color:#cfcfcf;">F</div>
<div class="t" style="left:11px;top:237.7px;height:12px;line-height:12px;font-family:'Liberation Mono',monospace;font-size:9px;color:#cfcfcf;">L</div>
<div class="t" style="left:1.5px;top:254.5px;height:12px;line-height:12px;font-family:'Liberation Mono',monospace;font-size:9px;color:#c8c8c8;letter-spacing:-0.1px">EDL</div>
<svg class="abs" style="left:4px;top:273px" width="5" height="14" viewBox="0 0 5 14"><rect width="5" height="4" fill="#3b7fd9"/><rect y="4" width="5" height="4" fill="#e8b830"/><rect y="8" width="5" height="3" fill="#e04a2a"/><rect y="11" width="5" height="3" fill="#3b7fd9"/></svg>
<div class="t" style="left:11px;top:270.3px;height:12px;line-height:12px;font-family:'Liberation Mono',monospace;font-size:9px;color:#cfcfcf;">N</div>
<div class="t" style="left:11px;top:277.7px;height:12px;line-height:12px;font-family:'Liberation Mono',monospace;font-size:9px;color:#cfcfcf;">R</div>
<svg class="abs" style="left:3px;top:293px" width="6" height="14" viewBox="0 0 6 14"><rect width="6" height="14" fill="#4a86c8"/><rect x="1" y="2" width="3" height="4" fill="#e8b830"/><rect x="2" y="8" width="3" height="4" fill="#d8a040"/></svg>
<div class="t" style="left:12px;top:294.5px;height:12px;line-height:12px;font-family:'Liberation Mono',monospace;font-size:10px;color:#cfcfcf;">B</div>
<svg class="abs" style="left:2px;top:323px" width="15" height="14" viewBox="0 0 15 14" fill="none" stroke="#d0d0d0" stroke-width="0.8"><path d="M2,6.5 H10 V13 H2 Z" fill="#f0b020" stroke="none"/><path d="M2,6.5 L4.5,4 H12.5 V10.5 L10,13 M10,6.5 L12.5,4 M2,6.5 H10 V13 H2 Z"/><path d="M4,5 V0.8 M2.8,2 L4,0.6 L5.2,2" stroke-width="0.8"/></svg>
<svg class="abs" style="left:2px;top:343px" width="15" height="14" viewBox="0 0 15 14" fill="none" stroke="#d0d0d0" stroke-width="0.8"><path d="M1.5,4.5 L4.5,1.5 H13 V9.5 L10,12.5 M10,4.5 L13,1.5"/><path d="M4.5,1.5 V9.5 H13 M4.5,9.5 L1.5,12.5" stroke-width="0.5" opacity="0.8"/><path d="M1.5,4.5 H10 V12.5 H1.5 Z"/><circle cx="6" cy="8.5" r="1" fill="#f0b020" stroke="none"/></svg>
<svg class="abs" style="left:2px;top:364px" width="15" height="14" viewBox="0 0 15 14" fill="none" stroke="#d0d0d0" stroke-width="0.8"><path d="M5,13.5 Q2.5,10.5 1.5,8 Q2.8,6.8 4.5,9 V3 Q5.4,2 6.3,3 V7 M6.3,3 V1.8 Q7.3,0.8 8.2,1.8 V7 M8.2,2.5 Q9.2,1.7 10,2.8 V7.2 M10,4 Q11.2,3.4 12,4.6 V9.5 Q11.8,12.2 10.8,13.5 Z" stroke-width="0.8" stroke="#c8c8c8"/></svg>
<svg class="abs" style="left:2px;top:385px" width="15" height="14" viewBox="0 0 15 14" fill="none" stroke="#d0d0d0" stroke-width="0.8"><path d="M1.5,4.5 H10 V12.5 H1.5 Z" fill="#f0b020" stroke="none"/><path d="M1.5,4.5 L4.5,1.5 H13 V9.5 L10,12.5 M10,4.5 L13,1.5"/><path d="M4.5,1.5 V9.5 H13 M4.5,9.5 L1.5,12.5" stroke-width="0.5" opacity="0.8"/><path d="M1.5,4.5 H10 V12.5 H1.5 Z"/></svg>
<svg class="abs" style="left:2px;top:405px" width="15" height="14" viewBox="0 0 15 14" fill="none" stroke="#d0d0d0" stroke-width="0.8"><path d="M4.5,1.5 H13 V9.5 H4.5 Z" fill="#f0b020" stroke="none"/><path d="M1.5,4.5 L4.5,1.5 H13 V9.5 L10,12.5 M10,4.5 L13,1.5"/><path d="M4.5,1.5 V9.5 H13 M4.5,9.5 L1.5,12.5" stroke-width="0.5" opacity="0.8"/><path d="M1.5,4.5 H10 V12.5 H1.5 Z"/></svg>
<svg class="abs" style="left:2px;top:425px" width="15" height="14" viewBox="0 0 15 14" fill="none" stroke="#d0d0d0" stroke-width="0.8"><path d="M1.5,4.5 L4.5,1.5 V9.5 L1.5,12.5 Z" fill="#f0b020" stroke="none"/><path d="M1.5,4.5 L4.5,1.5 H13 V9.5 L10,12.5 M10,4.5 L13,1.5"/><path d="M4.5,1.5 V9.5 H13 M4.5,9.5 L1.5,12.5" stroke-width="0.5" opacity="0.8"/><path d="M1.5,4.5 H10 V12.5 H1.5 Z"/></svg>
<svg class="abs" style="left:2px;top:445px" width="15" height="14" viewBox="0 0 15 14" fill="none" stroke="#d0d0d0" stroke-width="0.8"><path d="M10,4.5 L13,1.5 V9.5 L10,12.5 Z" fill="#f0b020" stroke="none"/><path d="M1.5,4.5 L4.5,1.5 H13 V9.5 L10,12.5 M10,4.5 L13,1.5"/><path d="M4.5,1.5 V9.5 H13 M4.5,9.5 L1.5,12.5" stroke-width="0.5" opacity="0.8"/><path d="M1.5,4.5 H10 V12.5 H1.5 Z"/></svg>
<svg class="abs" style="left:2px;top:465px" width="15" height="14" viewBox="0 0 15 14" fill="none" stroke="#d0d0d0" stroke-width="0.8"><path d="M1.5,4.5 L4.5,1.5 H13 L10,4.5 Z" fill="#f0b020" stroke="none"/><path d="M1.5,4.5 L4.5,1.5 H13 V9.5 L10,12.5 M10,4.5 L13,1.5"/><path d="M4.5,1.5 V9.5 H13 M4.5,9.5 L1.5,12.5" stroke-width="0.5" opacity="0.8"/><path d="M1.5,4.5 H10 V12.5 H1.5 Z"/></svg>
<svg class="abs" style="left:2px;top:485px" width="15" height="14" viewBox="0 0 15 14" fill="none" stroke="#d0d0d0" stroke-width="0.8"><path d="M1.5,4.5 L4.5,1.5 H13 V9.5 L10,12.5 M10,4.5 L13,1.5"/><path d="M4.5,1.5 V9.5 H13 M4.5,9.5 L1.5,12.5" stroke-width="0.5" opacity="0.8"/><path d="M1.5,4.5 H10 V12.5 H1.5 Z"/><path d="M1.5,12.5 L4.5,9.5 H13 L10,12.5 Z" fill="#f0b020" stroke="none"/></svg>
<svg class="abs" style="left:2px;top:505px" width="15" height="14" viewBox="0 0 15 14" fill="none" stroke="#d0d0d0" stroke-width="0.8"><rect x="4" y="3.5" width="7" height="7" fill="#f0b020" stroke="none"/><path d="M1.5,4 V1.5 H4.5 M10.5,1.5 H13.5 V4 M13.5,10 V12.5 H10.5 M4.5,12.5 H1.5 V10" stroke="#e0e0e0" stroke-width="1"/></svg>
<div class="t" style="left:2px;top:526.5px;height:12px;line-height:12px;font-family:'Liberation Mono',monospace;font-size:11px;color:#d9a030;font-family:'Liberation Sans',sans-serif">2D</div>
<svg class="abs" style="left:2px;top:545px" width="15" height="14" viewBox="0 0 15 14" fill="none" stroke="#d0d0d0" stroke-width="0.8"><rect x="2" y="2" width="11" height="10.5"/><path d="M2,5 H13"/><path d="M7.5,6.5 V11 M5.2,8.8 H9.8" stroke="#e8a62c"/></svg>
<div class="abs" style="left:888px;top:116px;width:194px;height:513px;border-top:1px solid #303135"></div>
<div class="t " style="left:895px;top:127.1px;color:#d8d8d8">搜索:</div>
<div class="abs" style="left:915px;top:123.5px;width:161.5px;height:14.5px;border:1px solid #3b3c41;background:#222327"></div>
<div class="t " style="left:919px;top:127.1px;color:#d8d8d8">围墙</div>
<div class="cb on" style="left:896px;top:144.3px"></div>
<div class="t " style="left:911px;top:145.1px;color:#d8d8d8">点</div>
<div class="cb on" style="left:958px;top:144.3px"></div>
<div class="t " style="left:973px;top:145.1px;color:#d8d8d8">线</div>
<div class="cb on" style="left:1019px;top:144.3px"></div>
<div class="t " style="left:1035px;top:145.1px;color:#d8d8d8">面</div>
<svg class="abs" style="left:897px;top:165px" width="8" height="6" viewBox="0 0 8 6"><path d="M0.8,1 L4,4.6 L7.2,1" fill="none" stroke="#8d8e91" stroke-width="0.9"/></svg>
<div class="t " style="left:910px;top:163.6px;color:#d8d8d8">数据源</div>
<svg class="abs" style="left:910px;top:181px" width="8" height="6" viewBox="0 0 8 6"><path d="M0.8,1 L4,4.6 L7.2,1" fill="none" stroke="#8d8e91" stroke-width="0.9"/></svg>
<div class="cb on" style="left:924px;top:178.8px"></div>
<div class="t " style="left:940px;top:179.6px;color:#d8d8d8">250820</div>
<svg class="abs" style="left:923px;top:197px" width="8" height="6" viewBox="0 0 8 6"><path d="M0.8,1 L4,4.6 L7.2,1" fill="none" stroke="#8d8e91" stroke-width="0.9"/></svg>
<div class="cb on" style="left:937px;top:194.8px"></div>
<div class="t " style="left:953px;top:195.6px;color:#d8d8d8">PIPPT 点地物[0]</div>
<div class="cb on" style="left:950px;top:211.3px"></div>
<div class="t " style="left:966px;top:212.1px;color:#d8d8d8">51030106 围墙顶点--40[0]</div>
<svg class="abs" style="left:923px;top:229.5px" width="8" height="6" viewBox="0 0 8 6"><path d="M0.8,1 L4,4.6 L7.2,1" fill="none" stroke="#8d8e91" stroke-width="0.9"/></svg>
<div class="cb on" style="left:937px;top:227.3px"></div>
<div class="t " style="left:953px;top:228.1px;color:#d8d8d8">PIPLK 交叉跨越[9]</div>
<div class="abs" style="left:947px;top:241px;width:129px;height:16px;background:#3b342a"></div>
<div class="cb on" style="left:950px;top:243.3px"></div>
<div class="t " style="left:966px;top:244.1px;color:#e8381a">51030250 跨围墙--88[7]</div>
<svg class="abs" style="left:923px;top:261.5px" width="8" height="6" viewBox="0 0 8 6"><path d="M0.8,1 L4,4.6 L7.2,1" fill="none" stroke="#8d8e91" stroke-width="0.9"/></svg>
<div class="cb on" style="left:937px;top:259.3px"></div>
<div class="t " style="left:953px;top:260.1px;color:#d8d8d8">PIPNT 面地物[5]</div>
<div class="cb on" style="left:950px;top:275.3px"></div>
<div class="t " style="left:966px;top:276.1px;color:#d8d8d8">51030369 断面围墙--21[0]</div>
<div class="abs" style="left:881.6px;top:102px;width:7.2px;height:527px;background:#18191b"></div>
<div class="abs" style="left:190.8px;top:115.5px;width:691px;height:1.2px;background:#161a20"></div>
<div class="abs" style="left:894px;top:159px;width:182.5px;height:464px;border:1px solid #2f3034;border-right-color:#2a2b2f"></div>
<div class="abs" style="left:185px;top:102px;width:5.8px;height:527px;background:#1a1b1d"></div>
<div class="t" style="left:2px;top:634.3px;color:#dcdcdc;font-size:8.2px">打开工程 -- E:/SOUTH/test/250820/250820.sld (未读消息: 7)</div>
<div class="t" style="right:4px;top:634.3px;color:#dcdcdc;font-size:8.2px">当前点数: 81 百万</div>
<!--CHROMEEND-->
</body>
</html>
